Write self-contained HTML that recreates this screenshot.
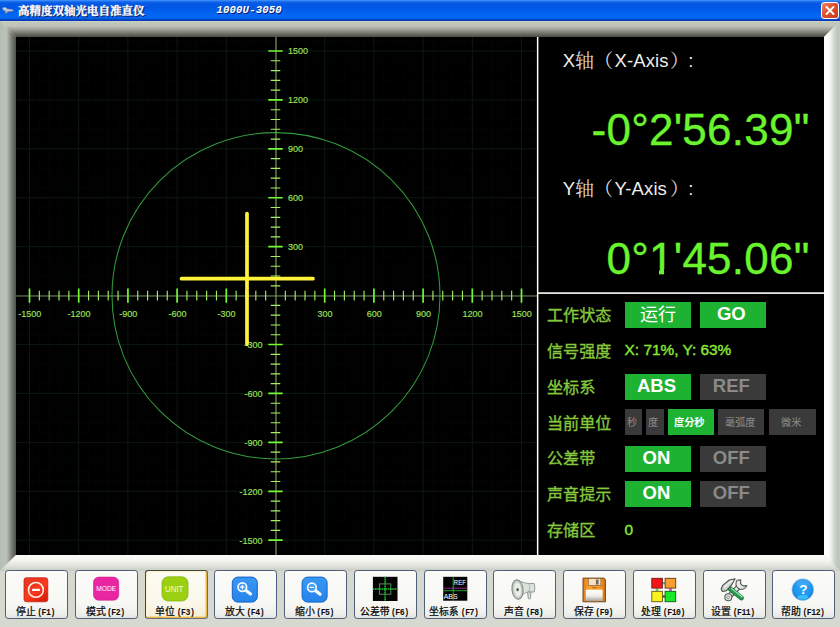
<!DOCTYPE html>
<html lang="zh"><head><meta charset="utf-8"><title>高精度双轴光电自准直仪</title>
<style>
html,body{margin:0;padding:0}
body{width:840px;height:627px;overflow:hidden;position:relative;background:#d6d9d0;font-family:"Liberation Sans",sans-serif}
.abs,.cj{position:absolute}
.cj{overflow:visible;display:block}
#titlebar{position:absolute;left:0;top:0;width:840px;height:21px;
 background:linear-gradient(180deg,#4a98ff 0,#1a70f0 1.5px,#0759e2 3px,#0058e8 8px,#0364f2 14px,#0468f4 17.5px,#0556dc 19px,#0838b0 20px,#0a3cb4 21px)}
#titlebar .t2{position:absolute;left:216.6px;top:4.1px;font:italic bold 10.6px "Liberation Mono",monospace;color:#fff;letter-spacing:0.15px;text-shadow:1px 1px 0 #0a1e6e;white-space:pre}
#close{position:absolute;left:821px;top:2px;width:16px;height:15px;border:1px solid #fff;border-radius:3px;
 background:linear-gradient(135deg,#ee8a6a 0,#dc5030 45%,#c83c1c 100%)}
#plotwrap{position:absolute;left:16px;top:37px;width:808px;height:518px;background:#000}
.bev{position:absolute}
.lab{position:absolute;white-space:pre}
.gbtn{position:absolute;box-sizing:border-box;padding-right:3px;height:26px;background:#1eb233;color:#fff;font-weight:bold;text-align:center}
.gbtn.off{background:#3a3a3a;color:#8a8a8a}
.gbtn span{display:block}
.tb{position:absolute;top:570.3px;width:61px;height:47.1px;border:1.1px solid #4f5f78;border-radius:3.2px;
 background:linear-gradient(180deg,#fbfbf9 0,#f7f7f4 70%,#eeefeb 92%,#e0e3e0 100%)}
.tb.hot{border-color:#3f4640 #66707a #66707a #3f4640;box-shadow:inset -1px -1px 0 #e9b646,inset 1px 1px 0 #fdf2cc,inset -2px -2px 0 #f6dc9c,inset 2px 2px 0 #fef8e2;background:linear-gradient(180deg,#fdfcf4 0,#faf7ea 70%,#f4ecd4 100%)}
.tb .ic{position:absolute;left:-1.1px;top:-1.1px;overflow:visible}
.tb .fk{position:absolute;top:36.6px;font:bold 8.2px "Liberation Mono",monospace;color:#0a0a0a;white-space:pre;letter-spacing:-0.5px}
</style></head>
<body>
<div id="titlebar"><svg class="abs" style="left:1.5px;top:5.6px" width="12" height="8.6" viewBox="0 0 14 10"><path d="M0.5 2.2 L4 1.6 L6 3.2 L12.5 4 L13.5 5.3 L12 6.2 L6.5 6.6 L5.5 8.4 L3.5 8.2 L4 6 L1 4.6 Z" fill="#b9c3d6" stroke="#5f6f94" stroke-width=".6"/><path d="M1 2.6 L4 2.2 L5.6 3.6" stroke="#eef2fa" stroke-width=".7" fill="none"/></svg><svg class="cj" style="left:18.6px;top:4.57px;" width="126.6" height="14.12" viewBox="0 -10.73 126.6 14.12"><text x="0" y="0" font-family="Liberation Serif, Noto Serif CJK SC, serif" font-size="11.5" font-weight="bold" fill="#0a1c66" stroke="#0a1c66" stroke-width="0.5">高精度双轴光电自准直仪</text></svg><svg class="cj" style="left:17.7px;top:3.57px;" width="126.6" height="14.12" viewBox="0 -10.73 126.6 14.12"><text x="0" y="0" font-family="Liberation Serif, Noto Serif CJK SC, serif" font-size="11.5" font-weight="bold" fill="#ffffff" stroke="#ffffff" stroke-width="0.35">高精度双轴光电自准直仪</text></svg><span class="t2">1000U-3050</span><div id="close"><svg class="abs" style="left:0;top:0" width="15" height="15" viewBox="0 0 15 15"><path d="M4.5 4 L11.5 11 M11.5 4 L4.5 11" stroke="#fff" stroke-width="1.9" stroke-linecap="round"/></svg></div></div>
<div class="bev" style="left:0;top:21px;width:840px;height:16px;background:linear-gradient(180deg,#cdd5d2 0,#bec7b8 10%,#c4c5ba 30%,#a8a99f 48%,#87887e 66%,#66675e 84%,#4a4b44 100%);clip-path:polygon(0 0,840px 0,824px 16px,16px 16px)"></div><div class="bev" style="left:0;top:21px;width:16px;height:550px;background:linear-gradient(90deg,#b6bdb4 0,#bbc2b8 40%,#a6aba1 52%,#878c82 66%,#676b63 83%,#4e524a 100%);clip-path:polygon(0 0,16px 16px,16px 534px,0 550px)"></div><div class="bev" style="left:824px;top:21px;width:16px;height:550px;background:linear-gradient(90deg,#ffffff 0,#fdfdfb 30%,#e6eae3 48%,#cdd4cb 66%,#bcc4bb 85%,#bfc7be 100%);clip-path:polygon(16px 0,0 16px,0 534px,16px 550px)"></div><div class="bev" style="left:0;top:555px;width:840px;height:16px;background:linear-gradient(180deg,#fcfcf9 0,#f3f4ef 35%,#e0e3dc 68%,#c6cbc3 100%);clip-path:polygon(16px 0,824px 0,840px 16px,0 16px)"></div>
<div id="plotwrap"></div><svg class="abs" style="left:16px;top:37px" width="808" height="518" viewBox="16 37 808 518" font-family="Liberation Sans, sans-serif"><defs><clipPath id="pc"><rect x="16" y="37" width="521" height="518"/></clipPath></defs><g clip-path="url(#pc)" shape-rendering="auto"><path d="M19.66 37V555M16 41.22H537M39.34 37V555M16 60.78H537M49.18 37V555M16 70.57H537M59.02 37V555M16 80.35H537M68.86 37V555M16 90.14H537M88.54 37V555M16 109.7H537M98.38 37V555M16 119.49H537M108.22 37V555M16 129.27H537M118.06 37V555M16 139.06H537M137.74 37V555M16 158.62H537M147.58 37V555M16 168.41H537M157.42 37V555M16 178.19H537M167.26 37V555M16 187.98H537M186.94 37V555M16 207.54H537M196.78 37V555M16 217.33H537M206.62 37V555M16 227.11H537M216.46 37V555M16 236.9H537M236.14 37V555M16 256.46H537M245.98 37V555M16 266.25H537M255.82 37V555M16 276.03H537M265.66 37V555M16 285.82H537M285.34 37V555M16 305.38H537M295.18 37V555M16 315.17H537M305.02 37V555M16 324.95H537M314.86 37V555M16 334.74H537M334.54 37V555M16 354.3H537M344.38 37V555M16 364.09H537M354.22 37V555M16 373.87H537M364.06 37V555M16 383.66H537M383.74 37V555M16 403.22H537M393.58 37V555M16 413.01H537M403.42 37V555M16 422.79H537M413.26 37V555M16 432.58H537M432.94 37V555M16 452.14H537M442.78 37V555M16 461.93H537M452.62 37V555M16 471.71H537M462.46 37V555M16 481.5H537M482.14 37V555M16 501.06H537M491.98 37V555M16 510.85H537M501.82 37V555M16 520.63H537M511.66 37V555M16 530.42H537M531.34 37V555M16 549.98H537" stroke="#030503" stroke-width="1" fill="none"/><path d="M29.5 37V555M16 51H537M78.7 37V555M16 99.92H537M127.9 37V555M16 148.84H537M177.1 37V555M16 197.76H537M226.3 37V555M16 246.68H537M275.5 37V555M16 295.6H537M324.7 37V555M16 344.52H537M373.9 37V555M16 393.44H537M423.1 37V555M16 442.36H537M472.3 37V555M16 491.28H537M521.5 37V555M16 540.2H537" stroke="#0c1810" stroke-width="1" fill="none"/><ellipse cx="276" cy="295.8" rx="164" ry="163.2" fill="none" stroke="#339a3c" stroke-width="1.05"/><path d="M16 296H537" stroke="#6f8a5c" stroke-width="1" fill="none"/><path d="M276 37V555" stroke="#8fb264" stroke-width="1" fill="none"/><path d="M39.34 290.8V300.4M270.7 60.78H280.3M49.18 290.8V300.4M270.7 70.57H280.3M59.02 290.8V300.4M270.7 80.35H280.3M68.86 290.8V300.4M270.7 90.14H280.3M88.54 290.8V300.4M270.7 109.7H280.3M98.38 290.8V300.4M270.7 119.49H280.3M108.22 290.8V300.4M270.7 129.27H280.3M118.06 290.8V300.4M270.7 139.06H280.3M137.74 290.8V300.4M270.7 158.62H280.3M147.58 290.8V300.4M270.7 168.41H280.3M157.42 290.8V300.4M270.7 178.19H280.3M167.26 290.8V300.4M270.7 187.98H280.3M186.94 290.8V300.4M270.7 207.54H280.3M196.78 290.8V300.4M270.7 217.33H280.3M206.62 290.8V300.4M270.7 227.11H280.3M216.46 290.8V300.4M270.7 236.9H280.3M236.14 290.8V300.4M270.7 256.46H280.3M245.98 290.8V300.4M270.7 266.25H280.3M255.82 290.8V300.4M270.7 276.03H280.3M265.66 290.8V300.4M270.7 285.82H280.3M285.34 290.8V300.4M270.7 305.38H280.3M295.18 290.8V300.4M270.7 315.17H280.3M305.02 290.8V300.4M270.7 324.95H280.3M314.86 290.8V300.4M270.7 334.74H280.3M334.54 290.8V300.4M270.7 354.3H280.3M344.38 290.8V300.4M270.7 364.09H280.3M354.22 290.8V300.4M270.7 373.87H280.3M364.06 290.8V300.4M270.7 383.66H280.3M383.74 290.8V300.4M270.7 403.22H280.3M393.58 290.8V300.4M270.7 413.01H280.3M403.42 290.8V300.4M270.7 422.79H280.3M413.26 290.8V300.4M270.7 432.58H280.3M432.94 290.8V300.4M270.7 452.14H280.3M442.78 290.8V300.4M270.7 461.93H280.3M452.62 290.8V300.4M270.7 471.71H280.3M462.46 290.8V300.4M270.7 481.5H280.3M482.14 290.8V300.4M270.7 501.06H280.3M491.98 290.8V300.4M270.7 510.85H280.3M501.82 290.8V300.4M270.7 520.63H280.3M511.66 290.8V300.4M270.7 530.42H280.3" stroke="#a4ee66" stroke-width="1.15" fill="none"/><path d="M29.5 288.4V302.8M268.3 51H282.7M78.7 288.4V302.8M268.3 99.92H282.7M127.9 288.4V302.8M268.3 148.84H282.7M177.1 288.4V302.8M268.3 197.76H282.7M226.3 288.4V302.8M268.3 246.68H282.7M324.7 288.4V302.8M268.3 344.52H282.7M373.9 288.4V302.8M268.3 393.44H282.7M423.1 288.4V302.8M268.3 442.36H282.7M472.3 288.4V302.8M268.3 491.28H282.7M521.5 288.4V302.8M268.3 540.2H282.7" stroke="#72fa32" stroke-width="1.7" fill="none"/><g font-size="9" fill="#9ee05a" stroke="#9ee05a" stroke-width=".15"><text x="29.8" y="317.2" text-anchor="middle">-1500</text><text x="262.6" y="543.5" text-anchor="end">-1500</text><text x="79" y="317.2" text-anchor="middle">-1200</text><text x="262.6" y="494.58" text-anchor="end">-1200</text><text x="128.2" y="317.2" text-anchor="middle">-900</text><text x="262.6" y="445.66" text-anchor="end">-900</text><text x="177.4" y="317.2" text-anchor="middle">-600</text><text x="262.6" y="396.74" text-anchor="end">-600</text><text x="226.6" y="317.2" text-anchor="middle">-300</text><text x="262.6" y="347.82" text-anchor="end">-300</text><text x="325" y="317.2" text-anchor="middle">300</text><text x="288" y="249.98">300</text><text x="374.2" y="317.2" text-anchor="middle">600</text><text x="288" y="201.06">600</text><text x="423.4" y="317.2" text-anchor="middle">900</text><text x="288" y="152.14">900</text><text x="472.6" y="317.2" text-anchor="middle">1200</text><text x="288" y="103.22">1200</text><text x="521.8" y="317.2" text-anchor="middle">1500</text><text x="288" y="54.3">1500</text></g><path d="M181.5 278.7H313M247 213.5V344.2" stroke="#fff23a" stroke-width="3.7" stroke-linecap="round" fill="none"/></g><rect x="536.9" y="37" width="1.5" height="518" fill="#ffffff"/><rect x="537" y="292.3" width="287" height="1.6" fill="#ffffff"/></svg>
<span class="lab" style="left:562.8px;top:51px;font-size:18.5px;line-height:20px;color:#eeeeee">X</span><svg class="cj" style="left:575.3px;top:49.95px;" width="38.1" height="23.75" viewBox="0 -18.05 38.1 23.75"><text x="0" y="0" font-family="Liberation Serif, Noto Serif CJK SC, serif" font-size="19" fill="#dcdcdc">轴（</text></svg><span class="lab" style="left:614.6px;top:51px;font-size:18.5px;line-height:20px;color:#eeeeee;letter-spacing:0.1px">X-Axis</span><svg class="cj" style="left:669.8px;top:49.95px;" width="20" height="23.75" viewBox="0 -18.05 20 23.75"><text x="0" y="0" font-family="Liberation Serif, Noto Serif CJK SC, serif" font-size="19" fill="#dcdcdc">）</text></svg><span class="lab" style="left:688.2px;top:51px;font-size:18.5px;line-height:20px;color:#eeeeee">:</span><span class="lab" style="left:562.8px;top:178.7px;font-size:18.5px;line-height:20px;color:#eeeeee">Y</span><svg class="cj" style="left:575.3px;top:177.65px;" width="38.1" height="23.75" viewBox="0 -18.05 38.1 23.75"><text x="0" y="0" font-family="Liberation Serif, Noto Serif CJK SC, serif" font-size="19" fill="#dcdcdc">轴（</text></svg><span class="lab" style="left:614.6px;top:178.7px;font-size:18.5px;line-height:20px;color:#eeeeee;letter-spacing:0.1px">Y-Axis</span><svg class="cj" style="left:669.8px;top:177.65px;" width="20" height="23.75" viewBox="0 -18.05 20 23.75"><text x="0" y="0" font-family="Liberation Serif, Noto Serif CJK SC, serif" font-size="19" fill="#dcdcdc">）</text></svg><span class="lab" style="left:688.2px;top:178.7px;font-size:18.5px;line-height:20px;color:#eeeeee">:</span><div style="position:absolute;right:30.4px;top:108.2px;font-size:44px;line-height:44px;color:#6af42e;white-space:pre;letter-spacing:0.25px;-webkit-text-stroke:0.35px #6af42e">-0°2'56.39"</div><div style="position:absolute;right:30.4px;top:236.5px;font-size:44px;line-height:44px;color:#6af42e;white-space:pre;letter-spacing:0.25px;-webkit-text-stroke:0.35px #6af42e">0°1'45.06"</div><div class="abs" style="left:650.4px;top:269.4px;width:8.8px;height:6px;background:#000"></div><div class="abs" style="left:663.8px;top:269.4px;width:8.8px;height:6px;background:#000"></div><svg class="cj" style="left:547.3px;top:305.99px;" width="64.35" height="19.75" viewBox="0 -15.01 64.35 19.75"><text x="0" y="0" font-family="Liberation Sans, Noto Sans CJK SC, sans-serif" font-size="16.1" fill="#86c83c" stroke="#86c83c" stroke-width="0.35">工作状态</text></svg><svg class="cj" style="left:547.3px;top:341.99px;" width="64.35" height="19.75" viewBox="0 -15.01 64.35 19.75"><text x="0" y="0" font-family="Liberation Sans, Noto Sans CJK SC, sans-serif" font-size="16.1" fill="#86c83c" stroke="#86c83c" stroke-width="0.35">信号强度</text></svg><svg class="cj" style="left:547.3px;top:377.79px;" width="48.5" height="19.75" viewBox="0 -15.01 48.5 19.75"><text x="0" y="0" font-family="Liberation Sans, Noto Sans CJK SC, sans-serif" font-size="16.1" fill="#86c83c" stroke="#86c83c" stroke-width="0.35">坐标系</text></svg><svg class="cj" style="left:547.3px;top:413.69px;" width="64.35" height="19.75" viewBox="0 -15.01 64.35 19.75"><text x="0" y="0" font-family="Liberation Sans, Noto Sans CJK SC, sans-serif" font-size="16.1" fill="#86c83c" stroke="#86c83c" stroke-width="0.35">当前单位</text></svg><svg class="cj" style="left:547.3px;top:449.49px;" width="48.5" height="19.75" viewBox="0 -15.01 48.5 19.75"><text x="0" y="0" font-family="Liberation Sans, Noto Sans CJK SC, sans-serif" font-size="16.1" fill="#86c83c" stroke="#86c83c" stroke-width="0.35">公差带</text></svg><svg class="cj" style="left:547.3px;top:485.49px;" width="64.35" height="19.75" viewBox="0 -15.01 64.35 19.75"><text x="0" y="0" font-family="Liberation Sans, Noto Sans CJK SC, sans-serif" font-size="16.1" fill="#86c83c" stroke="#86c83c" stroke-width="0.35">声音提示</text></svg><svg class="cj" style="left:547.3px;top:521.29px;" width="48.5" height="19.75" viewBox="0 -15.01 48.5 19.75"><text x="0" y="0" font-family="Liberation Sans, Noto Sans CJK SC, sans-serif" font-size="16.1" fill="#86c83c" stroke="#86c83c" stroke-width="0.35">存储区</text></svg><div class="gbtn" style="left:624.8px;top:301.6px;width:66.4px;height:26px;line-height:24.7px;font-size:18px"></div><svg class="cj" style="left:639.8px;top:304.08px;" width="36.2" height="22" viewBox="0 -16.72 36.2 22"><text x="0" y="0" font-family="Liberation Sans, Noto Sans CJK SC, sans-serif" font-size="18.1" fill="#ffffff">运行</text></svg><div class="gbtn" style="left:699.6px;top:301.6px;width:66.4px;height:26px;line-height:24.7px;font-size:18.5px">GO</div><span class="lab" style="left:624.6px;top:341.2px;font-size:15.4px;color:#8ae636;-webkit-text-stroke:0.4px #8ae636">X: 71%, Y: 63%</span><div class="gbtn" style="left:624.8px;top:373.6px;width:66.4px;height:26px;line-height:24.7px;font-size:18.5px">ABS</div><div class="gbtn off" style="left:699.6px;top:373.6px;width:66.4px;height:26px;line-height:24.7px;font-size:18.5px">REF</div><div class="gbtn off" style="left:624.8px;top:409.4px;width:17.6px;height:25.6px;line-height:24.3px;font-size:18px"></div><svg class="cj" style="left:627px;top:416.11px;" width="11.2" height="12.75" viewBox="0 -9.69 11.2 12.75"><text x="0" y="0" font-family="Liberation Sans, Noto Sans CJK SC, sans-serif" font-size="10.2" fill="#8c8c8c">秒</text></svg><div class="gbtn off" style="left:646.2px;top:409.4px;width:17.6px;height:25.6px;line-height:24.3px;font-size:18px"></div><svg class="cj" style="left:648.4px;top:416.11px;" width="11.2" height="12.75" viewBox="0 -9.69 11.2 12.75"><text x="0" y="0" font-family="Liberation Sans, Noto Sans CJK SC, sans-serif" font-size="10.2" fill="#8c8c8c">度</text></svg><div class="gbtn" style="left:667.8px;top:409.4px;width:45.8px;height:25.6px;line-height:24.3px;font-size:18px"></div><svg class="cj" style="left:673.9px;top:416.11px;" width="31.6" height="12.75" viewBox="0 -9.69 31.6 12.75"><text x="0" y="0" font-family="Liberation Sans, Noto Sans CJK SC, sans-serif" font-size="10.2" font-weight="bold" fill="#ffffff">度分秒</text></svg><div class="gbtn off" style="left:718.2px;top:409.4px;width:46.2px;height:25.6px;line-height:24.3px;font-size:18px"></div><svg class="cj" style="left:724.5px;top:416.11px;" width="31.6" height="12.75" viewBox="0 -9.69 31.6 12.75"><text x="0" y="0" font-family="Liberation Sans, Noto Sans CJK SC, sans-serif" font-size="10.2" fill="#8c8c8c">毫弧度</text></svg><div class="gbtn off" style="left:769px;top:409.4px;width:47px;height:25.6px;line-height:24.3px;font-size:18px"></div><svg class="cj" style="left:780.8px;top:416.11px;" width="21.4" height="12.75" viewBox="0 -9.69 21.4 12.75"><text x="0" y="0" font-family="Liberation Sans, Noto Sans CJK SC, sans-serif" font-size="10.2" fill="#8c8c8c">微米</text></svg><div class="gbtn" style="left:624.8px;top:445.6px;width:66.4px;height:26px;line-height:24.7px;font-size:18.5px">ON</div><div class="gbtn off" style="left:699.6px;top:445.6px;width:66.4px;height:26px;line-height:24.7px;font-size:18.5px">OFF</div><div class="gbtn" style="left:624.8px;top:481.3px;width:66.4px;height:26px;line-height:24.7px;font-size:18.5px">ON</div><div class="gbtn off" style="left:699.6px;top:481.3px;width:66.4px;height:26px;line-height:24.7px;font-size:18.5px">OFF</div><span class="lab" style="left:624.6px;top:521px;font-size:15.4px;color:#8ae636;-webkit-text-stroke:0.4px #8ae636">0</span>
<div class="tb" style="left:5px"><svg class="ic" width="64" height="49" viewBox="0 0 64 49" font-family="Liberation Sans, sans-serif"><defs><linearGradient id="g0" x1="0" y1="0" x2=".7" y2="1"><stop offset="0" stop-color="#e83a26"/><stop offset=".4" stop-color="#f0351f"/><stop offset=".6" stop-color="#fb3a1c"/><stop offset="1" stop-color="#dc1f0c"/></linearGradient></defs><rect x="19" y="7.7" width="23.8" height="24.1" rx="2.4" fill="url(#g0)" stroke="#b8200e" stroke-width=".7"/><circle cx="30.9" cy="19.9" r="7.4" fill="none" stroke="#fff3ea" stroke-width="1.55"/><rect x="27.1" y="18.8" width="7.8" height="2.2" rx=".3" fill="#fff"/></svg><svg class="cj" style="left:9.76px;top:34.59px;" width="20.8" height="12.38" viewBox="0 -9.4 20.8 12.38"><text x="0" y="0" font-family="Liberation Sans, Noto Sans CJK SC, sans-serif" font-size="9.9" fill="#0a0a0a" stroke="#0a0a0a" stroke-width="0.25">停止</text></svg><span class="fk" style="left:31.16px">(F1)</span></div><div class="tb" style="left:74.77px"><svg class="ic" width="64" height="49" viewBox="0 0 64 49" font-family="Liberation Sans, sans-serif"><rect x="18.5" y="7.1" width="25.2" height="23.1" rx="5.2" fill="#e925a2" stroke="#c81c8a" stroke-width=".6"/><text x="31.3" y="21.3" font-size="7.9" fill="#fff" text-anchor="middle" textLength="20" lengthAdjust="spacingAndGlyphs">MODE</text></svg><svg class="cj" style="left:9.76px;top:34.59px;" width="20.8" height="12.38" viewBox="0 -9.4 20.8 12.38"><text x="0" y="0" font-family="Liberation Sans, Noto Sans CJK SC, sans-serif" font-size="9.9" fill="#0a0a0a" stroke="#0a0a0a" stroke-width="0.25">模式</text></svg><span class="fk" style="left:31.16px">(F2)</span></div><div class="tb hot" style="left:144.54px"><svg class="ic" width="64" height="49" viewBox="0 0 64 49" font-family="Liberation Sans, sans-serif"><rect x="18" y="6.8" width="26" height="24.2" rx="6.2" fill="#9bd012" stroke="#86b60e" stroke-width=".8"/><text x="30.2" y="21.6" font-size="8.3" fill="#f4ffd8" text-anchor="middle" textLength="18.4" lengthAdjust="spacingAndGlyphs">UNIT</text></svg><svg class="cj" style="left:9.76px;top:34.59px;" width="20.8" height="12.38" viewBox="0 -9.4 20.8 12.38"><text x="0" y="0" font-family="Liberation Sans, Noto Sans CJK SC, sans-serif" font-size="9.9" fill="#0a0a0a" stroke="#0a0a0a" stroke-width="0.25">单位</text></svg><span class="fk" style="left:31.16px">(F3)</span></div><div class="tb" style="left:214.31px"><svg class="ic" width="64" height="49" viewBox="0 0 64 49" font-family="Liberation Sans, sans-serif"><defs><linearGradient id="gz3" x1="0" y1="0" x2="0" y2="1"><stop offset="0" stop-color="#3a98f4"/><stop offset="1" stop-color="#2584ea"/></linearGradient></defs><rect x="18.3" y="7.1" width="25" height="25" rx="5.6" fill="url(#gz3)" stroke="#1262c6" stroke-width="1"/><path d="M32.1 20.4L36.5 24" stroke="#f4faff" stroke-width="3.2" stroke-linecap="round"/><circle cx="28.3" cy="17.1" r="4.3" fill="#3e9af2" stroke="#f4faff" stroke-width="1.7"/><path d="M26.1 17.1H30.5" stroke="#fff" stroke-width="1.25"/><path d="M28.3 14.9V19.3" stroke="#fff" stroke-width="1.25"/></svg><svg class="cj" style="left:9.76px;top:34.59px;" width="20.8" height="12.38" viewBox="0 -9.4 20.8 12.38"><text x="0" y="0" font-family="Liberation Sans, Noto Sans CJK SC, sans-serif" font-size="9.9" fill="#0a0a0a" stroke="#0a0a0a" stroke-width="0.25">放大</text></svg><span class="fk" style="left:31.16px">(F4)</span></div><div class="tb" style="left:284.08px"><svg class="ic" width="64" height="49" viewBox="0 0 64 49" font-family="Liberation Sans, sans-serif"><defs><linearGradient id="gz4" x1="0" y1="0" x2="0" y2="1"><stop offset="0" stop-color="#3a98f4"/><stop offset="1" stop-color="#2584ea"/></linearGradient></defs><rect x="18.1" y="7.1" width="25" height="25" rx="5.6" fill="url(#gz4)" stroke="#1262c6" stroke-width="1"/><path d="M31.7 20.7L36.1 24.3" stroke="#f4faff" stroke-width="3.2" stroke-linecap="round"/><circle cx="27.9" cy="17.4" r="4.3" fill="#3e9af2" stroke="#f4faff" stroke-width="1.7"/><path d="M25.7 17.4H30.1" stroke="#fff" stroke-width="1.25"/></svg><svg class="cj" style="left:9.76px;top:34.59px;" width="20.8" height="12.38" viewBox="0 -9.4 20.8 12.38"><text x="0" y="0" font-family="Liberation Sans, Noto Sans CJK SC, sans-serif" font-size="9.9" fill="#0a0a0a" stroke="#0a0a0a" stroke-width="0.25">缩小</text></svg><span class="fk" style="left:31.16px">(F5)</span></div><div class="tb" style="left:353.85px"><svg class="ic" width="64" height="49" viewBox="0 0 64 49" font-family="Liberation Sans, sans-serif"><rect x="18.9" y="6.8" width="24.6" height="24.2" fill="#040404"/><rect x="25.4" y="13.9" width="11.4" height="10.3" fill="none" stroke="#5f9a5f" stroke-width=".9"/><path d="M18.9 19H43.5M31.1 6.8V31" stroke="#1ec431" stroke-width="1.5" stroke-dasharray="1.6 .55"/></svg><svg class="cj" style="left:4.81px;top:34.59px;" width="30.7" height="12.38" viewBox="0 -9.4 30.7 12.38"><text x="0" y="0" font-family="Liberation Sans, Noto Sans CJK SC, sans-serif" font-size="9.9" fill="#0a0a0a" stroke="#0a0a0a" stroke-width="0.25">公差带</text></svg><span class="fk" style="left:36.11px">(F6)</span></div><div class="tb" style="left:423.62px"><svg class="ic" width="64" height="49" viewBox="0 0 64 49" font-family="Liberation Sans, sans-serif"><rect x="19.2" y="6.8" width="24.1" height="23.9" fill="#040404"/><path d="M19.2 18.2H43.3" stroke="#a62aa6" stroke-width=".9"/><path d="M19.2 20.7H43.3M29.2 6.8V30.7" stroke="#22b83a" stroke-width=".9"/><text x="29.8" y="14.5" font-size="6.5" fill="#ffffff" textLength="12" lengthAdjust="spacingAndGlyphs">REF</text><text x="19.7" y="28.6" font-size="6.5" fill="#ffffff" textLength="14" lengthAdjust="spacingAndGlyphs">ABS</text></svg><svg class="cj" style="left:4.81px;top:34.59px;" width="30.7" height="12.38" viewBox="0 -9.4 30.7 12.38"><text x="0" y="0" font-family="Liberation Sans, Noto Sans CJK SC, sans-serif" font-size="9.9" fill="#0a0a0a" stroke="#0a0a0a" stroke-width="0.25">坐标系</text></svg><span class="fk" style="left:36.11px">(F7)</span></div><div class="tb" style="left:493.39px"><svg class="ic" width="64" height="49" viewBox="0 0 64 49" font-family="Liberation Sans, sans-serif"><path d="M25 10.2 C30 12.6 33 13.4 36 13.5 L41.2 13.5 Q42.6 17.7 41.2 22 L36 22 C33 22.2 30 23.6 26 28.6 Z" fill="#dde2dd" stroke="#8b958c" stroke-width=".9"/><path d="M36 13.5 Q37.4 17.7 36 22" fill="none" stroke="#a7b0a8" stroke-width=".8"/><path d="M34.6 22 L37.9 22 L37.5 28.4 Q36.3 29.6 35.2 28.4 Z" fill="#d3d9d3" stroke="#8b958c" stroke-width=".9"/><ellipse cx="24.5" cy="19.5" rx="5.5" ry="9.7" transform="rotate(-6 24.5 19.5)" fill="#c9d0ca" stroke="#838e84" stroke-width="1.1"/><ellipse cx="24.7" cy="19.6" rx="3.9" ry="7.6" transform="rotate(-6 24.7 19.6)" fill="#e9eee9" stroke="#b4bcb5" stroke-width=".6"/><ellipse cx="24.6" cy="19.7" rx="1.2" ry="1.6" fill="#3f5a44"/></svg><svg class="cj" style="left:9.76px;top:34.59px;" width="20.8" height="12.38" viewBox="0 -9.4 20.8 12.38"><text x="0" y="0" font-family="Liberation Sans, Noto Sans CJK SC, sans-serif" font-size="9.9" fill="#0a0a0a" stroke="#0a0a0a" stroke-width="0.25">声音</text></svg><span class="fk" style="left:31.16px">(F8)</span></div><div class="tb" style="left:563.16px"><svg class="ic" width="64" height="49" viewBox="0 0 64 49" font-family="Liberation Sans, sans-serif"><defs><linearGradient id="gs" x1="0" y1="0" x2="1" y2="0"><stop offset="0" stop-color="#e47a16"/><stop offset=".25" stop-color="#f7a236"/><stop offset=".8" stop-color="#f39428"/><stop offset="1" stop-color="#d86c10"/></linearGradient><linearGradient id="gl" x1="0" y1="0" x2="0" y2="1"><stop offset="0" stop-color="#ffffff"/><stop offset=".55" stop-color="#f1efec"/><stop offset="1" stop-color="#a9a29a"/></linearGradient></defs><path d="M20 8.1 H41 L42.4 9.6 V31.8 H20 Z" fill="url(#gs)" stroke="#6a3a10" stroke-width=".9" stroke-linejoin="round"/><rect x="25.3" y="8.6" width="12.6" height="7" fill="#f6e3c4" stroke="#8a5a24" stroke-width=".7"/><rect x="32.9" y="9.5" width="2.7" height="5.1" fill="#7c6a58"/><rect x="22.8" y="19.7" width="16.8" height="11.3" fill="url(#gl)"/><path d="M29 17.7H33.6" stroke="#b0600e" stroke-width=".8"/></svg><svg class="cj" style="left:9.76px;top:34.59px;" width="20.8" height="12.38" viewBox="0 -9.4 20.8 12.38"><text x="0" y="0" font-family="Liberation Sans, Noto Sans CJK SC, sans-serif" font-size="9.9" fill="#0a0a0a" stroke="#0a0a0a" stroke-width="0.25">保存</text></svg><span class="fk" style="left:31.16px">(F9)</span></div><div class="tb" style="left:632.93px"><svg class="ic" width="64" height="49" viewBox="0 0 64 49" font-family="Liberation Sans, sans-serif"><path d="M29.6 13.2H32" stroke="#35c0b8" stroke-width="2.3"/><path d="M29.6 26.5H32" stroke="#3a5a2a" stroke-width="2.3"/><path d="M24 18.3V21.2" stroke="#7ac07a" stroke-width="2.6"/><path d="M37.5 18.3V21.2" stroke="#c452c4" stroke-width="2.6"/><rect x="18.8" y="8.3" width="10.6" height="9.8" fill="#f21616" stroke="#701a10" stroke-width=".9"/><rect x="32.1" y="8.3" width="10.6" height="9.8" fill="#f89e30" stroke="#5e3a10" stroke-width=".9"/><rect x="18.8" y="21.3" width="10.6" height="10.4" fill="#fbf21c" stroke="#5e5810" stroke-width=".9"/><rect x="32.1" y="21.3" width="10.6" height="10.4" fill="#16ea26" stroke="#0c5a14" stroke-width=".9"/></svg><svg class="cj" style="left:7.55px;top:34.59px;" width="20.8" height="12.38" viewBox="0 -9.4 20.8 12.38"><text x="0" y="0" font-family="Liberation Sans, Noto Sans CJK SC, sans-serif" font-size="9.9" fill="#0a0a0a" stroke="#0a0a0a" stroke-width="0.25">处理</text></svg><span class="fk" style="left:28.95px">(F10)</span></div><div class="tb" style="left:702.7px"><svg class="ic" width="64" height="49" viewBox="0 0 64 49" font-family="Liberation Sans, sans-serif"><path d="M25.6 26.9 L36.6 15.9" stroke="#565e58" stroke-width="5.6" stroke-linecap="round"/><path d="M25.6 26.9 L36.6 15.9" stroke="#e6e9e6" stroke-width="3.4" stroke-linecap="round"/><circle cx="25.3" cy="27.2" r="3.5" fill="#e6e9e6" stroke="#565e58" stroke-width="1.1"/><circle cx="25.1" cy="27.4" r="1.4" fill="#fafaf7" stroke="#6f7771" stroke-width=".8"/><path d="M34.2 10.2 a5.6 5.6 0 1 0 9.6 5.4 l-3.9 .3 -2.4 -2.3 .3 -3.7 z" fill="#e6e9e6" stroke="#565e58" stroke-width="1.15" stroke-linejoin="round"/><path d="M26.9 18.6 L38.4 27.9" stroke="#1d6e38" stroke-width="5" stroke-linecap="round"/><path d="M26.9 18.6 L38.4 27.9" stroke="#2f9a52" stroke-width="3.2" stroke-linecap="round"/><path d="M28.4 18.4 L39.1 26.8" stroke="#8af0b0" stroke-width="1.2" stroke-linecap="round"/><path d="M18.2 18.9 L19.7 15.4 L26.2 10 L32.1 8.8 L28.6 15 L23.5 20.6 L19.5 21.5 Z" fill="#cfd5d1" stroke="#4c544e" stroke-width="1.15" stroke-linejoin="round"/><path d="M21.2 17.4 L27.4 11.9 L30 10.8" stroke="#f7f7f4" stroke-width="1.1" fill="none"/></svg><svg class="cj" style="left:7.55px;top:34.59px;" width="20.8" height="12.38" viewBox="0 -9.4 20.8 12.38"><text x="0" y="0" font-family="Liberation Sans, Noto Sans CJK SC, sans-serif" font-size="9.9" fill="#0a0a0a" stroke="#0a0a0a" stroke-width="0.25">设置</text></svg><span class="fk" style="left:28.95px">(F11)</span></div><div class="tb" style="left:772.47px"><svg class="ic" width="64" height="49" viewBox="0 0 64 49" font-family="Liberation Sans, sans-serif"><defs><radialGradient id="gh" cx=".5" cy=".42" r=".62"><stop offset="0" stop-color="#2aa6f6"/><stop offset=".7" stop-color="#1c92ee"/><stop offset="1" stop-color="#0c62bc"/></radialGradient></defs><circle cx="30.8" cy="19.6" r="10.9" fill="url(#gh)" stroke="#a9ccee" stroke-width=".7"/><ellipse cx="30.8" cy="27.3" rx="5.6" ry="2.4" fill="#4fe6ff" opacity=".55"/><ellipse cx="30.8" cy="13.2" rx="7" ry="3.8" fill="#fff" opacity=".12"/><text x="31.3" y="24.2" font-size="13.6" font-weight="bold" fill="#fff" text-anchor="middle">?</text></svg><svg class="cj" style="left:7.55px;top:34.59px;" width="20.8" height="12.38" viewBox="0 -9.4 20.8 12.38"><text x="0" y="0" font-family="Liberation Sans, Noto Sans CJK SC, sans-serif" font-size="9.9" fill="#0a0a0a" stroke="#0a0a0a" stroke-width="0.25">帮助</text></svg><span class="fk" style="left:28.95px">(F12)</span></div>
</body></html>
